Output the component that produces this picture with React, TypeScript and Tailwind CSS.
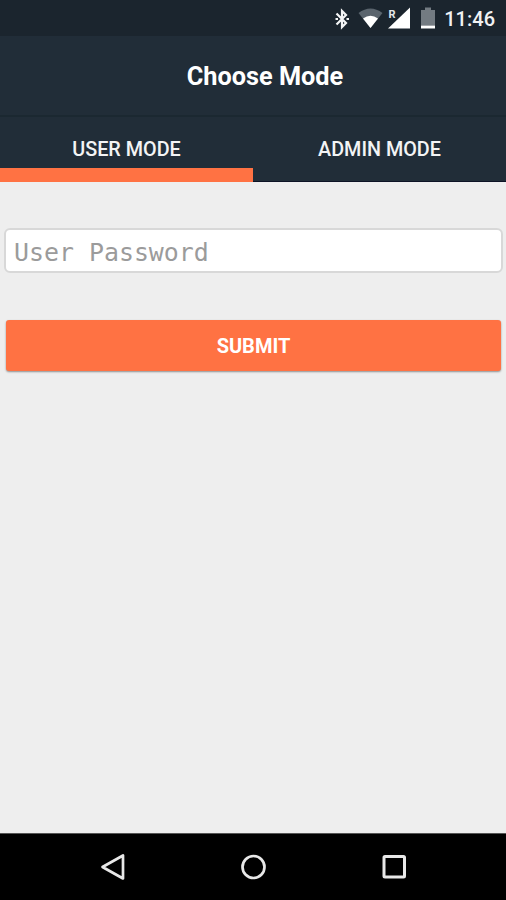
import { useState } from 'react'
import clsx from 'clsx'

const tabs = ['User Mode', 'Admin Mode']

function StatusBar() {
  return (
    <div className="flex h-9 shrink-0 items-center justify-end bg-[#1b252e] pt-px pr-[11px]">
      <svg width="112" height="36" viewBox="0 0 112 36" fill="none">
        <path d="M5.500 12.500 15 22 11 26V10L15 14 5.500 23.500" stroke="#f4f5f6" strokeWidth="2.200" />
        <path d="M4.500 18h2.500M15.500 18h2.500" stroke="#f4f5f6" strokeWidth="2" />
        <path d="M27.500 12Q39.500 3 51.500 12L39.500 27Z" fill="#5a646d" />
        <path d="M32 17.500Q39.500 12 47 17.500L39.500 27Z" fill="#fff" />
        <path d="M57 27.500 79 6.500V27.500Z" fill="#fff" />
        <text x="57.500" y="17" fill="#e4e6e8" fontSize="11" fontWeight="700" fontFamily="Roboto, sans-serif">
          R
        </text>
        <path d="M90 9h4V6.500h6V9h4v15.500H90Z" fill="#737b82" />
        <path d="M90 24.500h14v3H90Z" fill="#fff" />
      </svg>
      <span className="w-[52px] text-right text-xl font-medium whitespace-nowrap text-[#f1f2f3]">11:46</span>
    </div>
  )
}

function NavigationBar() {
  return (
    <div className="flex h-[67px] shrink-0 items-center justify-center gap-[112px] border-t border-[#555] bg-black pl-px">
      <svg width="29" height="28" viewBox="0 0 29 28" fill="none" stroke="#e8e8e8" strokeWidth="2.7">
        <path d="M24 2.500V25.500L3.500 14Z" strokeLinejoin="round" />
      </svg>
      <svg width="28" height="28" viewBox="0 0 28 28" fill="none" stroke="#e8e8e8" strokeWidth="2.7">
        <circle cx="13.500" cy="14" r="11" />
      </svg>
      <svg width="29" height="28" viewBox="0 0 29 28" fill="none" stroke="#e8e8e8" strokeWidth="3">
        <rect x="4" y="3.500" width="20.500" height="20.500" rx="1" />
      </svg>
    </div>
  )
}

export default function App() {
  const [activeTab, setActiveTab] = useState(0)
  const [password, setPassword] = useState('')

  return (
    <div className="flex h-[900px] w-[506px] flex-col overflow-hidden bg-[#eee] font-['Roboto',sans-serif]">
      <StatusBar />

      <header className="flex h-[81px] shrink-0 items-center justify-center border-b-2 border-[#1b2831] bg-[#212d38] pt-[2px] pl-6">
        <h1 className="text-[25.3px] font-bold text-white">Choose Mode</h1>
      </header>

      <div className="flex h-[65px] shrink-0 bg-[#212d38]">
        {tabs.map((tab, i) => (
          <button
            key={tab}
            onClick={() => setActiveTab(i)}
            className={clsx(
              'flex-1 pt-[15px] text-[19.8px] font-medium text-[#f3f4f5] uppercase',
              i === activeTab ? 'border-b-[14px] border-[#ff7243] pb-0' : 'border-b border-[#0d1325] pb-[13px]',
            )}
          >
            {tab}
          </button>
        ))}
      </div>

      <form className="flex flex-1 flex-col px-1 pt-[46px]" onSubmit={(e) => e.preventDefault()}>
        <input
          type="password"
          value={password}
          onChange={(e) => setPassword(e.target.value)}
          placeholder="User Password"
          className="h-[45px] w-[499px] rounded-md border-2 border-[#d8d8d8] bg-white px-2 pt-[3px] font-['DejaVu_Sans_Mono',monospace] text-[24.9px] text-[#333] outline-none placeholder:text-[#9b9b9b]"
        />
        <button
          type="submit"
          className="mt-[47px] ml-[2px] h-[51px] w-[495px] rounded-[3px] bg-[#ff7243] pt-px text-xl font-bold text-white uppercase shadow-[0_1px_2px_rgba(0,0,0,0.4)]"
        >
          Submit
        </button>
      </form>

      <NavigationBar />
    </div>
  )
}
